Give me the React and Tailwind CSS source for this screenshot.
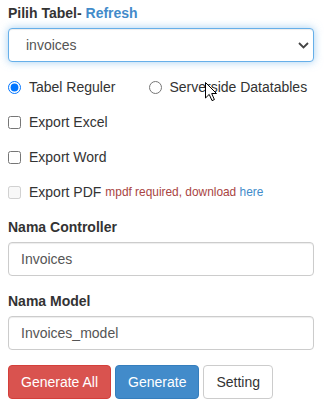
import React from "react";

const font = { fontFamily: '"Liberation Sans", Arial, Helvetica, sans-serif' };

function Cursor() {
  return (
    <svg
      className="absolute left-[205px] top-[82px] pointer-events-none"
      width="13"
      height="20"
      viewBox="0 0 13 20"
    >
      <path
        d="M0.5 0.5 L0.5 16 L4.2 12.4 L7 18.6 L9.4 17.6 L6.7 11.5 L11.5 11.5 Z"
        fill="#fff"
        stroke="#000"
        strokeWidth="1"
        strokeLinejoin="miter"
      />
    </svg>
  );
}

export default function App() {
  return (
    <div
      className="relative w-[333px] h-[412px] bg-white text-[14px] leading-[20px] text-[#333]"
      style={font}
    >
      <div className="ml-2 w-[306px] pt-[3px]">
        {/* Pilih Tabel */}
        <div className="mb-[15px]">
          <div className="mb-[5px] font-bold">
            Pilih Tabel- <span className="text-[#428bca]">Refresh</span>
          </div>
          <div className="flex h-[34px] items-center justify-between rounded-[4px] border border-[#66afe9] bg-white pl-[17px] pr-[4px] text-[#555] shadow-[inset_0_1px_1px_rgba(0,0,0,0.075),0_0_8px_rgba(102,175,233,0.6)]">
            <span>invoices</span>
            <svg width="11" height="7" viewBox="0 0 11 7">
              <path d="M1 1 L5.5 5.5 L10 1" fill="none" stroke="#444" strokeWidth="1.8" />
            </svg>
          </div>
        </div>

        {/* Radios */}
        <div className="mb-[15px] flex h-[20px] items-center">
          <label className="flex items-center">
            <input type="radio" name="mode" defaultChecked className="m-0 h-[13px] w-[13px]" />
            <span className="ml-[8px]">Tabel Reguler</span>
          </label>
          <label className="ml-[34px] flex items-center">
            <input type="radio" name="mode" className="m-0 h-[13px] w-[13px]" />
            <span className="ml-[7px]">Serverside Datatables</span>
          </label>
        </div>

        {/* Checkboxes */}
        <label className="mb-[15px] flex h-[20px] items-center">
          <input type="checkbox" className="m-0 h-[13px] w-[13px]" />
          <span className="ml-[8px]">Export Excel</span>
        </label>
        <label className="mb-[15px] flex h-[20px] items-center">
          <input type="checkbox" className="m-0 h-[13px] w-[13px]" />
          <span className="ml-[8px]">Export Word</span>
        </label>
        <label className="mb-[15px] flex h-[20px] items-center">
          <input type="checkbox" disabled className="m-0 h-[13px] w-[13px]" />
          <span className="ml-[8px]">Export PDF</span>
          <span className="ml-[4px] text-[11.9px] text-[#a94442]">
            mpdf required, download <span className="text-[#428bca]">here</span>
          </span>
        </label>

        {/* Nama Controller */}
        <div className="mb-[15px]">
          <div className="mb-[5px] font-bold">Nama Controller</div>
          <div className="flex h-[34px] items-center rounded-[4px] border border-[#ccc] bg-white px-[12px] text-[#555] shadow-[inset_0_1px_1px_rgba(0,0,0,0.075)]">
            Invoices
          </div>
        </div>

        {/* Nama Model */}
        <div className="mb-[15px]">
          <div className="mb-[5px] font-bold">Nama Model</div>
          <div className="flex h-[34px] items-center rounded-[4px] border border-[#ccc] bg-white px-[12px] text-[#555] shadow-[inset_0_1px_1px_rgba(0,0,0,0.075)]">
            Invoices_model
          </div>
        </div>

        {/* Buttons */}
        <div className="flex gap-[4px]">
          <button className="h-[34px] rounded-[4px] border border-[#d43f3a] bg-[#d9534f] px-[12px] text-white">
            Generate All
          </button>
          <button className="h-[34px] rounded-[4px] border border-[#357ebd] bg-[#428bca] px-[12px] text-white">
            Generate
          </button>
          <button className="h-[34px] rounded-[4px] border border-[#ccc] bg-white px-[12px] text-[#333]">
            Setting
          </button>
        </div>
      </div>
      <Cursor />
    </div>
  );
}
